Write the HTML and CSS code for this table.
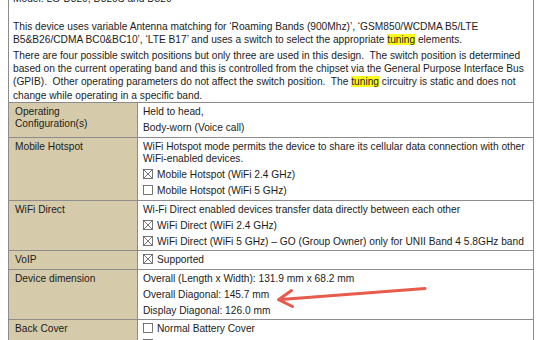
FILE: index.html
```html
<!DOCTYPE html>
<html>
<head>
<meta charset="utf-8">
<link rel="stylesheet" href="styles.css">
</head>
<body>
<div class="page">
  <div class="intro">
    <p class="model">Model: LG-D820, D820S and D820</p>
    <p class="para">This device uses variable Antenna matching for ‘Roaming Bands (900Mhz)’, ‘GSM850/WCDMA B5/LTE B5&amp;B26/CDMA BC0&amp;BC10’, ‘LTE B17’ and uses a switch to select the appropriate <mark>tuning</mark> elements.</p>
    <p class="para">There are four possible switch positions but only three are used in this design.&nbsp; The switch position is determined based on the current operating band and this is controlled from the chipset via the General Purpose Interface Bus (GPIB).&nbsp; Other operating parameters do not affect the switch position.&nbsp; The <mark>tuning</mark> circuitry is static and does not change while operating in a specific band.</p>
  </div>
  <table class="spec">
    <tr>
      <th>Operating Configuration(s)</th>
      <td><p>Held to head,</p><p>Body-worn (Voice call)</p></td>
    </tr>
    <tr>
      <th>Mobile Hotspot</th>
      <td>
        <p>WiFi Hotspot mode permits the device to share its cellular data connection with other WiFi-enabled devices.</p>
        <p><svg class="cb" viewBox="0 0 10 10"><rect x="0.5" y="0.5" width="9" height="9"/><path d="M0.5 0.5 L9.5 9.5 M9.5 0.5 L0.5 9.5"/></svg>Mobile Hotspot (WiFi 2.4 GHz)</p>
        <p><svg class="cb" viewBox="0 0 10 10"><rect x="0.5" y="0.5" width="9" height="9"/></svg>Mobile Hotspot (WiFi 5 GHz)</p>
      </td>
    </tr>
    <tr>
      <th>WiFi Direct</th>
      <td>
        <p>Wi-Fi Direct enabled devices transfer data directly between each other</p>
        <p><svg class="cb" viewBox="0 0 10 10"><rect x="0.5" y="0.5" width="9" height="9"/><path d="M0.5 0.5 L9.5 9.5 M9.5 0.5 L0.5 9.5"/></svg>WiFi Direct (WiFi 2.4 GHz)</p>
        <p><svg class="cb" viewBox="0 0 10 10"><rect x="0.5" y="0.5" width="9" height="9"/><path d="M0.5 0.5 L9.5 9.5 M9.5 0.5 L0.5 9.5"/></svg>WiFi Direct (WiFi 5 GHz) – GO (Group Owner) only for UNII Band 4 5.8GHz band</p>
      </td>
    </tr>
    <tr>
      <th>VoIP</th>
      <td><p><svg class="cb" viewBox="0 0 10 10"><rect x="0.5" y="0.5" width="9" height="9"/><path d="M0.5 0.5 L9.5 9.5 M9.5 0.5 L0.5 9.5"/></svg>Supported</p></td>
    </tr>
    <tr>
      <th>Device dimension</th>
      <td>
        <p>Overall (Length x Width): 131.9 mm x 68.2 mm</p>
        <p>Overall Diagonal: 145.7 mm</p>
        <p>Display Diagonal: 126.0 mm</p>
      </td>
    </tr>
    <tr>
      <th>Back Cover</th>
      <td>
        <p><svg class="cb" viewBox="0 0 10 10"><rect x="0.5" y="0.5" width="9" height="9"/></svg>Normal Battery Cover</p>
        <p><svg class="cb" viewBox="0 0 10 10"><rect x="0.5" y="0.5" width="9" height="9"/><path d="M0.5 0.5 L9.5 9.5 M9.5 0.5 L0.5 9.5"/></svg>Wireless Charger Battery Cover</p>
      </td>
    </tr>
  </table>
  <svg class="arrow" viewBox="0 0 540 340" width="540" height="340">
    <path d="M425 296.5 L281 307.5" />
    <path d="M291.5 298.5 L278.5 307.7 L292.5 314.5" />
  </svg>
</div>
</body>
</html>
```

FILE: styles.css
```css
html, body {
  margin: 0;
  padding: 0;
  background: #ffffff;
}

body {
  font-family: "Liberation Sans", Arial, sans-serif;
  color: #1c1c1c;
  overflow: hidden;
  width: 540px;
  height: 340px;
}

.page {
  position: relative;
  width: 526px;
  margin-left: 8px;
}

.intro {
  border-left: 1px solid #8c8c8c;
  border-right: 1px solid #8c8c8c;
  padding: 0 4px 0 4px;
  font-size: 10.2px;
  line-height: 13.3px;
}

.intro p {
  margin: 0;
}

.intro .model {
  margin-top: -8px;
  margin-bottom: 14.5px;
}

.intro .para + .para {
  margin-top: 2.5px;
}

mark {
  background: #fbfb1a;
  color: inherit;
}

.spec {
  width: 526px;
  border-collapse: collapse;
  font-size: 10.2px;
  line-height: 12.5px;
}

.spec th,
.spec td {
  border: 1px solid #8c8c8c;
  vertical-align: top;
  text-align: left;
  font-weight: normal;
  padding: 3px 3px 2px 5px;
}

.spec th {
  width: 118px;
  background: #d5cbaa;
  padding-left: 6px;
  padding-right: 4px;
  line-height: 12px;
}

.spec td p {
  margin: 0 0 3.5px 0;
}

.spec td p:last-child {
  margin-bottom: 0;
}

.cb {
  width: 10px;
  height: 10px;
  margin-right: 4px;
  vertical-align: -1px;
  fill: #ffffff;
  stroke: #555555;
  stroke-width: 0.8;
}

.arrow {
  position: absolute;
  left: -8px;
  top: 0;
  fill: none;
  stroke: #e85a4c;
  stroke-width: 3;
  stroke-linecap: round;
  stroke-linejoin: round;
  pointer-events: none;
}
```
